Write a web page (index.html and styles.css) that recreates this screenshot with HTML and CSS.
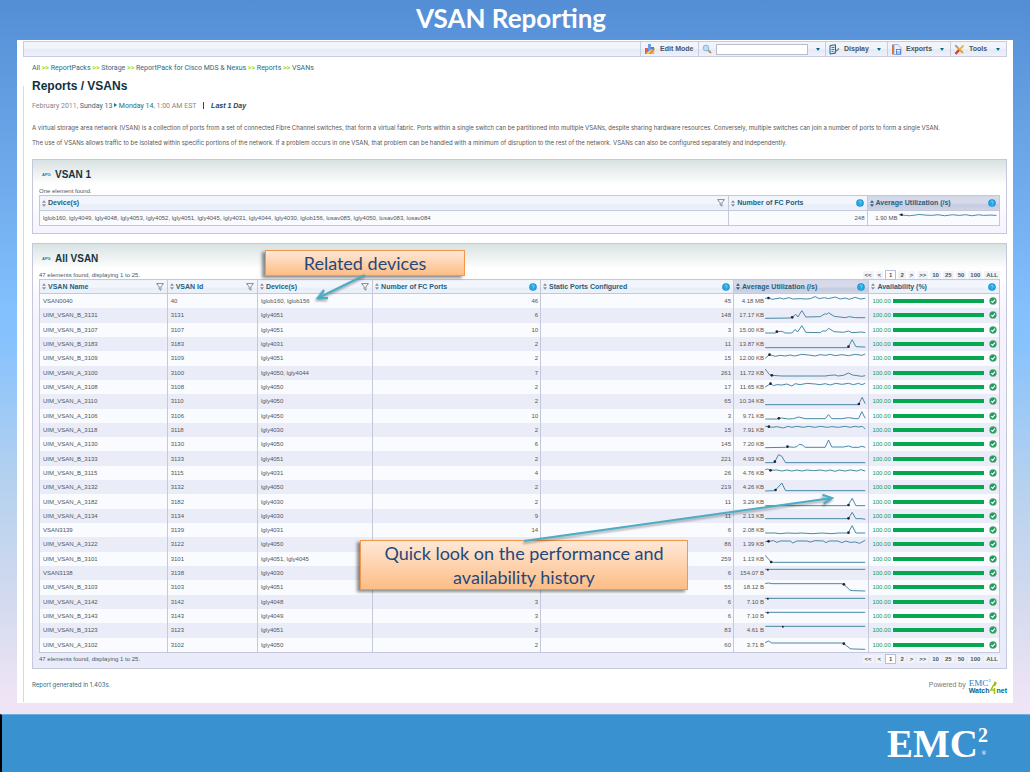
FILE: index.html
```html
<!DOCTYPE html>
<html lang="en">
<head>
<meta charset="utf-8">
<title>VSAN Reporting</title>
<link rel="stylesheet" href="styles.css">
</head>
<body>
<svg class="defs" aria-hidden="true">
  <defs>
    <symbol id="sort" viewBox="0 0 5 8"><path d="M2.5 0 5 3H0z M2.5 8 5 5H0z"/></symbol>
    <symbol id="funnel" viewBox="0 0 8 8"><path d="M.6.6h6.8L4.9 3.8v3.4L3.2 6V3.8z" fill="#fff" stroke="#666b78" stroke-width=".8"/></symbol>
    <symbol id="help" viewBox="0 0 8 8"><circle cx="4" cy="4" r="3.8" fill="#1592cf"/><circle cx="4" cy="4" r="3" fill="#22a5e2"/><path d="M2.8 3.1c0-1.6 2.5-1.5 2.4 0C5.1 4 4 4 4 5M4 5.8v.7" fill="none" stroke="#a5dcfa" stroke-width=".7"/></symbol>
    <symbol id="ok" viewBox="0 0 8 8"><circle cx="4" cy="4" r="3.7" fill="#6f968e"/><circle cx="4" cy="4" r="2.9" fill="#0fa552"/><path d="M2.3 4.1 3.6 5.3 5.9 2.7" fill="none" stroke="#fff" stroke-width="1.2"/></symbol>
    <marker id="head" viewBox="0 0 12 12" refX="10" refY="6" markerWidth="12" markerHeight="12" markerUnits="userSpaceOnUse" orient="auto"><path d="M1 1.5 10 6 1 10.5" fill="none" stroke="#4bacc6" stroke-width="2.2"/></marker>
  </defs>
</svg>
<div class="slide">
  <h1 class="slide-title">VSAN Reporting</h1>
  <main class="window">
    <div class="toolbar">
      <button class="tool edit" type="button">
        <svg width="12" height="12" viewBox="0 0 12 12"><path d="M1 5h3v6H1z" fill="#e15b4f"/><path d="M4 1h3v9H4z" fill="#6c9ee8"/><path d="M7 4h3v7H7z" fill="#4b7fd1"/><path d="M2 10 8 6l3 3-2 2H3z" fill="#f4c752"/><path d="m5 11 5-6 1 1-4 5z" fill="#d8843a"/></svg>
        Edit Mode</button>
      <div class="tool search">
        <svg width="10" height="10" viewBox="0 0 10 10"><path d="m5.5 5.5 3.5 3.5" stroke="#c8905c" stroke-width="1.8"/><circle cx="4" cy="4" r="2.9" fill="#b9dcf8" stroke="#8eb5dd"/></svg>
        <input type="text" aria-label="Search">
        <button class="drop" type="button" aria-label="Search options"><i class="caret"></i></button>
      </div>
      <button class="tool display" type="button">
        <svg width="11" height="11" viewBox="0 0 11 11"><path d="M1 1.500 6.500.8v8.400L1 10z" fill="#d8edf8" stroke="#285f86"/><path d="M2.500 3.500h3M2.500 5.500h3M2.500 7.500h2" stroke="#285f86" stroke-width=".8"/><path d="m5 8 4.500-4L10.500 5 6 9z" fill="#6d8698"/></svg>
        Display <i class="caret"></i></button>
      <button class="tool exports" type="button">
        <svg width="11" height="11" viewBox="0 0 11 11"><path d="M1 .5h2v10H1z" fill="#c77a50"/><path d="M3 .5h4l3 3v7H3z" fill="#e8f0fb" stroke="#8ba3cf" stroke-width=".8"/><path d="M5 5h5v5.500H5z" fill="#5c87d6"/><path d="M6 6h3v1.500H6zM6 8.500h3v1H6z" fill="#fff"/></svg>
        Exports <i class="caret"></i></button>
      <button class="tool tools" type="button">
        <svg width="11" height="11" viewBox="0 0 11 11"><path d="M1.500 1.500 9 9" stroke="#e2a23a" stroke-width="2"/><path d="M1 1.200 4 4" stroke="#9aa7b3" stroke-width="1.500"/><path d="M9.500 1.500 2 9" stroke="#f0b63c" stroke-width="1.800"/><path d="m5 6-3.500 4" stroke="#de3e2a" stroke-width="2.400"/></svg>
        Tools <i class="caret"></i></button>
    </div>

    <div class="report">
      <nav class="crumbs"><a href="#">All</a> <b>&gt;&gt;</b> <a href="#">ReportPacks</a> <b>&gt;&gt;</b> <a href="#">Storage</a> <b>&gt;&gt;</b> <a href="#">ReportPack for Cisco MDS &amp; Nexus</a> <b>&gt;&gt;</b> <a href="#">Reports</a> <b>&gt;&gt;</b> <a href="#">VSANs</a></nav>
      <h2>Reports / VSANs</h2>
      <p class="period">February 2011, <a href="#">Sunday 13</a> <i class="next"></i> <a href="#">Monday 14</a>, 1:00 AM EST <span class="range">Last 1 Day</span></p>
      <div class="about">
        <p>A virtual storage area network (VSAN) is a collection of ports from a set of connected Fibre Channel switches, that form a virtual fabric. Ports within a single switch can be partitioned into multiple VSANs, despite sharing hardware resources. Conversely, multiple switches can join a number of ports to form a single VSAN.</p>
        <p>The use of VSANs allows traffic to be isolated within specific portions of the network. If a problem occurs in one VSAN, that problem can be handled with a minimum of disruption to the rest of the network. VSANs can also be configured separately and independently.</p>
      </div>

      <section class="panel">
        <h3><small>APG</small>VSAN 1</h3>
        <div class="info"><span>One element found.</span></div>
        <table class="one">
          <colgroup><col class="w-list"><col class="w-count"><col></colgroup>
          <thead><tr>
            <th><div><svg class="sort"><use href="#sort"/></svg>Device(s)<svg class="ico"><use href="#funnel"/></svg></div></th>
            <th><div><svg class="sort"><use href="#sort"/></svg>Number of FC Ports<svg class="ico"><use href="#help"/></svg></div></th>
            <th class="sorted"><div><svg class="sort"><use href="#sort"/></svg>Average Utilization (/s)<svg class="ico"><use href="#help"/></svg></div></th>
          </tr></thead>
          <tbody><tr>
            <td>lglob160, lgly4049, lgly4048, lgly4053, lgly4052, lgly4051, lgly4045, lgly4031, lgly4044, lgly4030, lglob156, losav085, lgly4050, losav083, losav084</td>
            <td class="n">248</td>
            <td><div class="util"><span>1.90 MB</span><svg viewBox="0 0 303 42"><path d="M0 10 8 12 20 13 32 14 50 12 62 10 80 12 100 13 120 11 140 14 165 11 185 13 205 11 225 14 245 11 260 13 280 12 300 13"/><circle cx="8" cy="11" r="4"/></svg></div></td>
          </tr></tbody>
        </table>
      </section>

      <section class="panel">
        <h3><small>APG</small>All VSAN</h3>
        <div class="info"><span>47 elements found, displaying 1 to 25.</span>
          <nav class="pager"><a href="#">&lt;&lt;</a><a href="#">&lt;</a><a href="#" class="on">1</a><a href="#">2</a><a href="#">&gt;</a><a href="#">&gt;&gt;</a><a href="#">10</a><a href="#">25</a><a href="#">50</a><a href="#">100</a><a href="#">ALL</a></nav></div>
        <table class="all">
          <colgroup><col class="w-name"><col class="w-id"><col class="w-dev"><col class="w-fc"><col class="w-static"><col class="w-util"><col></colgroup>
          <thead><tr>
            <th><div><svg class="sort"><use href="#sort"/></svg>VSAN Name<svg class="ico"><use href="#funnel"/></svg></div></th>
            <th><div><svg class="sort"><use href="#sort"/></svg>VSAN Id<svg class="ico"><use href="#funnel"/></svg></div></th>
            <th><div><svg class="sort"><use href="#sort"/></svg>Device(s)<svg class="ico"><use href="#funnel"/></svg></div></th>
            <th><div><svg class="sort"><use href="#sort"/></svg>Number of FC Ports<svg class="ico"><use href="#help"/></svg></div></th>
            <th><div><svg class="sort"><use href="#sort"/></svg>Static Ports Configured<svg class="ico"><use href="#help"/></svg></div></th>
            <th class="sorted"><div><svg class="sort"><use href="#sort"/></svg>Average Utilization (/s)<svg class="ico"><use href="#help"/></svg></div></th>
            <th><div><svg class="sort"><use href="#sort"/></svg>Availability (%)<svg class="ico"><use href="#help"/></svg></div></th>
          </tr></thead>
          <tbody>
<tr><td>VSAN0040</td><td>40</td><td>lglob160, lglob156</td><td class="n">46</td><td class="n">45</td><td><div class="util"><span>4.18 MB</span><svg viewBox="0 0 303 42"><path d="M0 13 12 12 20 16 45 12 55 15 72 11 82 15 105 14 122 15 135 14 150 8 162 14 178 11 190 14 210 9 225 15 240 12 252 16 270 10 285 15 300 13"/><circle cx="10" cy="12" r="4"/></svg></div></td><td><div class="avail"><span>100.00</span><i></i><svg><use href="#ok"/></svg></div></td></tr>
<tr><td>UIM_VSAN_B_3131</td><td>3131</td><td>lgly4051</td><td class="n">6</td><td class="n">148</td><td><div class="util"><span>17.17 KB</span><svg viewBox="0 0 303 42"><path d="M0 31 75 30 82 27 92 19 98 27 110 8 122 27 165 26 180 17 185 19 190 14 207 25 240 29 253 26 270 29 300 29"/><circle cx="81" cy="28" r="4"/></svg></div></td><td><div class="avail"><span>100.00</span><i></i><svg><use href="#ok"/></svg></div></td></tr>
<tr><td>UIM_VSAN_B_3107</td><td>3107</td><td>lgly4051</td><td class="n">10</td><td class="n">3</td><td><div class="util"><span>15.00 KB</span><svg viewBox="0 0 303 42"><path d="M0 30 30 30 35 26 50 25 60 30 80 30 90 19 97 27 110 8 122 28 165 29 172 24 182 24 190 16 207 26 235 28 250 24 260 29 290 27 300 29"/><circle cx="35" cy="26" r="4"/></svg></div></td><td><div class="avail"><span>100.00</span><i></i><svg><use href="#ok"/></svg></div></td></tr>
<tr><td>UIM_VSAN_B_3183</td><td>3183</td><td>lgly4031</td><td class="n">2</td><td class="n">11</td><td><div class="util"><span>13.87 KB</span><svg viewBox="0 0 303 42"><path d="M0 32H246L250 29 261 8 272 29 300 30"/><circle cx="250" cy="29" r="4"/></svg></div></td><td><div class="avail"><span>100.00</span><i></i><svg><use href="#ok"/></svg></div></td></tr>
<tr><td>UIM_VSAN_B_3109</td><td>3109</td><td>lgly4051</td><td class="n">2</td><td class="n">15</td><td><div class="util"><span>12.00 KB</span><svg viewBox="0 0 303 42"><path d="M0 22 13 11 30 16 45 13 60 15 75 12 88 15 110 10 130 12 150 15 165 11 182 13 195 10 210 14 230 11 250 14 270 10 290 13 300 9"/><circle cx="13" cy="11" r="4"/></svg></div></td><td><div class="avail"><span>100.00</span><i></i><svg><use href="#ok"/></svg></div></td></tr>
<tr><td>UIM_VSAN_A_3100</td><td>3100</td><td>lgly4050, lgly4044</td><td class="n">7</td><td class="n">261</td><td><div class="util"><span>11.72 KB</span><svg viewBox="0 0 303 42"><path d="M0 9 13 26 20 28 50 30H180L195 28 210 27 218 30 235 28 250 21 262 27 290 31 300 29"/><circle cx="20" cy="28" r="4"/></svg></div></td><td><div class="avail"><span>100.00</span><i></i><svg><use href="#ok"/></svg></div></td></tr>
<tr><td>UIM_VSAN_A_3108</td><td>3108</td><td>lgly4050</td><td class="n">2</td><td class="n">17</td><td><div class="util"><span>11.65 KB</span><svg viewBox="0 0 303 42"><path d="M0 21 16 11 25 17 35 14 50 15 65 12 80 18 90 11 105 14 125 10 150 12 165 14 180 11 195 15 212 10 230 13 250 10 265 14 280 10 290 14 300 10"/><circle cx="16" cy="11" r="4"/></svg></div></td><td><div class="avail"><span>100.00</span><i></i><svg><use href="#ok"/></svg></div></td></tr>
<tr><td>UIM_VSAN_A_3110</td><td>3110</td><td>lgly4050</td><td class="n">2</td><td class="n">65</td><td><div class="util"><span>10.34 KB</span><svg viewBox="0 0 303 42"><path d="M0 32H278L281 30 291 10 300 29"/><circle cx="281" cy="30" r="4"/></svg></div></td><td><div class="avail"><span>100.00</span><i></i><svg><use href="#ok"/></svg></div></td></tr>
<tr><td>UIM_VSAN_A_3106</td><td>3106</td><td>lgly4050</td><td class="n">10</td><td class="n">3</td><td><div class="util"><span>9.71 KB</span><svg viewBox="0 0 303 42"><path d="M0 30H35L41 28 50 27 70 30 85 29 100 24 120 29H180L190 17 200 29H230L250 26 270 29H280L290 8 300 28"/><circle cx="41" cy="28" r="4"/></svg></div></td><td><div class="avail"><span>100.00</span><i></i><svg><use href="#ok"/></svg></div></td></tr>
<tr><td>UIM_VSAN_A_3118</td><td>3118</td><td>lgly4030</td><td class="n">2</td><td class="n">15</td><td><div class="util"><span>7.91 KB</span><svg viewBox="0 0 303 42"><path d="M0 10 11 11 20 13 35 11 55 15 68 10 80 13 95 10 115 13 130 10 150 13 165 10 185 13 200 11 220 13 240 10 255 13 270 10 280 12 292 10 300 18"/><circle cx="11" cy="11" r="4"/></svg></div></td><td><div class="avail"><span>100.00</span><i></i><svg><use href="#ok"/></svg></div></td></tr>
<tr><td>UIM_VSAN_A_3130</td><td>3130</td><td>lgly4050</td><td class="n">6</td><td class="n">145</td><td><div class="util"><span>7.20 KB</span><svg viewBox="0 0 303 42"><path d="M0 32 60 31 67 29 85 31 95 29 102 22 112 24 120 31H180L190 9 200 30H235L250 27 262 31 280 31 290 28 300 31"/><circle cx="67" cy="29" r="4"/></svg></div></td><td><div class="avail"><span>100.00</span><i></i><svg><use href="#ok"/></svg></div></td></tr>
<tr><td>UIM_VSAN_B_3133</td><td>3133</td><td>lgly4051</td><td class="n">2</td><td class="n">221</td><td><div class="util"><span>4.93 KB</span><svg viewBox="0 0 303 42"><path d="M0 32H25L29 29 40 8 50 13 61 32H300"/><circle cx="29" cy="29" r="4"/></svg></div></td><td><div class="avail"><span>100.00</span><i></i><svg><use href="#ok"/></svg></div></td></tr>
<tr><td>UIM_VSAN_B_3115</td><td>3115</td><td>lgly4031</td><td class="n">4</td><td class="n">26</td><td><div class="util"><span>4.76 KB</span><svg viewBox="0 0 303 42"><path d="M0 11 8 9 16 13 35 12 50 15 65 12 80 15 95 12 110 15 125 12 145 14 165 12 182 15 195 12 210 16 222 12 240 15 255 12 275 15 287 11 300 15"/><circle cx="16" cy="13" r="4"/></svg></div></td><td><div class="avail"><span>100.00</span><i></i><svg><use href="#ok"/></svg></div></td></tr>
<tr><td>UIM_VSAN_A_3132</td><td>3132</td><td>lgly4050</td><td class="n">2</td><td class="n">219</td><td><div class="util"><span>4.26 KB</span><svg viewBox="0 0 303 42"><path d="M0 33 25 32 31 30 50 9 61 32H300"/><circle cx="31" cy="30" r="4"/></svg></div></td><td><div class="avail"><span>100.00</span><i></i><svg><use href="#ok"/></svg></div></td></tr>
<tr><td>UIM_VSAN_A_3182</td><td>3182</td><td>lgly4030</td><td class="n">2</td><td class="n">11</td><td><div class="util"><span>3.29 KB</span><svg viewBox="0 0 303 42"><path d="M0 32H246L250 29 261 10 272 32H300"/><circle cx="250" cy="30" r="4"/></svg></div></td><td><div class="avail"><span>100.00</span><i></i><svg><use href="#ok"/></svg></div></td></tr>
<tr><td>UIM_VSAN_A_3134</td><td>3134</td><td>lgly4030</td><td class="n">9</td><td class="n">11</td><td><div class="util"><span>2.13 KB</span><svg viewBox="0 0 303 42"><path d="M0 29H246L250 28 261 10 272 29 290 29 300 31"/><circle cx="250" cy="28" r="4"/></svg></div></td><td><div class="avail"><span>100.00</span><i></i><svg><use href="#ok"/></svg></div></td></tr>
<tr><td>VSAN3139</td><td>3139</td><td>lgly4031</td><td class="n">14</td><td class="n">6</td><td><div class="util"><span>2.08 KB</span><svg viewBox="0 0 303 42"><path d="M0 30H30L45 32 65 30 90 31 110 30 140 32 170 30 200 32 220 30H246L250 28 261 8 272 30H300"/><circle cx="250" cy="29" r="4"/></svg></div></td><td><div class="avail"><span>100.00</span><i></i><svg><use href="#ok"/></svg></div></td></tr>
<tr><td>UIM_VSAN_A_3122</td><td>3122</td><td>lgly4050</td><td class="n"></td><td class="n">86</td><td><div class="util"><span>1.39 KB</span><svg viewBox="0 0 303 42"><path d="M0 14 10 13 25 11 35 16 45 12 75 12 83 18 95 12 125 12 135 15 150 11 175 12 182 17 192 12 218 12 230 17 242 12 255 16 270 15 283 19 300 10"/><circle cx="10" cy="13" r="4"/></svg></div></td><td><div class="avail"><span>100.00</span><i></i><svg><use href="#ok"/></svg></div></td></tr>
<tr><td>UIM_VSAN_B_3101</td><td>3101</td><td>lgly4051, lgly4045</td><td class="n"></td><td class="n">259</td><td><div class="util"><span>1.13 KB</span><svg viewBox="0 0 303 42"><path d="M0 10 18 30 25 31H300"/><circle cx="18" cy="30" r="4"/></svg></div></td><td><div class="avail"><span>100.00</span><i></i><svg><use href="#ok"/></svg></div></td></tr>
<tr><td>VSAN3138</td><td>3138</td><td>lgly4030</td><td class="n"></td><td class="n">6</td><td><div class="util"><span>154.07 B</span><svg viewBox="0 0 303 42"><path d="M0 10H300"/><circle cx="8" cy="11" r="3"/></svg></div></td><td><div class="avail"><span>100.00</span><i></i><svg><use href="#ok"/></svg></div></td></tr>
<tr><td>UIM_VSAN_B_3103</td><td>3103</td><td>lgly4051</td><td class="n">2</td><td class="n">55</td><td><div class="util"><span>18.12 B</span><svg viewBox="0 0 303 42"><path d="M0 11 10 9 20 11H230L236 13 255 31 265 32 300 33"/><circle cx="236" cy="13" r="4"/></svg></div></td><td><div class="avail"><span>100.00</span><i></i><svg><use href="#ok"/></svg></div></td></tr>
<tr><td>UIM_VSAN_A_3142</td><td>3142</td><td>lgly4048</td><td class="n">3</td><td class="n">6</td><td><div class="util"><span>7.10 B</span><svg viewBox="0 0 303 42"><path d="M0 10H300"/><circle cx="8" cy="11" r="3"/></svg></div></td><td><div class="avail"><span>100.00</span><i></i><svg><use href="#ok"/></svg></div></td></tr>
<tr><td>UIM_VSAN_B_3143</td><td>3143</td><td>lgly4049</td><td class="n">3</td><td class="n">6</td><td><div class="util"><span>7.10 B</span><svg viewBox="0 0 303 42"><path d="M0 10H300"/><circle cx="8" cy="11" r="3"/></svg></div></td><td><div class="avail"><span>100.00</span><i></i><svg><use href="#ok"/></svg></div></td></tr>
<tr><td>UIM_VSAN_B_3123</td><td>3123</td><td>lgly4051</td><td class="n">2</td><td class="n">83</td><td><div class="util"><span>4.61 B</span><svg viewBox="0 0 303 42"><path d="M0 10H300"/><circle cx="53" cy="11" r="3"/></svg></div></td><td><div class="avail"><span>100.00</span><i></i><svg><use href="#ok"/></svg></div></td></tr>
<tr><td>UIM_VSAN_A_3102</td><td>3102</td><td>lgly4050</td><td class="n">2</td><td class="n">60</td><td><div class="util"><span>3.71 B</span><svg viewBox="0 0 303 42"><path d="M0 14 10 9 20 15H230L236 17 255 32 265 33 300 34"/><circle cx="236" cy="17" r="4"/></svg></div></td><td><div class="avail"><span>100.00</span><i></i><svg><use href="#ok"/></svg></div></td></tr>
          </tbody>
        </table>
        <div class="info bottom"><span>47 elements found, displaying 1 to 25.</span>
          <nav class="pager"><a href="#">&lt;&lt;</a><a href="#">&lt;</a><a href="#" class="on">1</a><a href="#">2</a><a href="#">&gt;</a><a href="#">&gt;&gt;</a><a href="#">10</a><a href="#">25</a><a href="#">50</a><a href="#">100</a><a href="#">ALL</a></nav></div>
      </section>

      <div class="foot">
        <span class="time">Report generated in 1.403s.</span>
        <span class="powered">Powered by
          <span class="w4n"><span class="emc">EMC<sup>2</sup></span><span class="watch">Watch<svg width="7" height="14" viewBox="0 0 7 14"><path d="M4.500 0 7 2 5 5.500 3 4.500z" fill="#9cc31c"/><path d="M3.500 4 1 9h4M4.500 7v6" fill="none" stroke="#9cc31c" stroke-width="1.500"/></svg>net</span></span>
        </span>
      </div>
    </div>
  </main>

  <footer class="brand"><span class="logo">EMC<sup>2</sup><small>®</small></span></footer>

  <div class="callout related">Related devices</div>
  <div class="callout quick">Quick look on the performance and availability history</div>
  <svg class="arrows" width="1030" height="772" aria-hidden="true"><path d="M365 275 318 298" marker-end="url(#head)"/><path d="M524 541 832 498" marker-end="url(#head)"/></svg>
</div>
</body>
</html>
```
FILE: styles.css
```css
* { box-sizing: border-box; }

body {
  margin: 0;
  font-family: "Liberation Sans", Arial, sans-serif;
  font-size: 6px;
  line-height: 8px;
  color: #555;
}

h1, h2, h3, p { margin: 0; }
a { color: #2a6c82; text-decoration: none; }
.defs { position: absolute; width: 0; height: 0; }

.slide {
  position: relative;
  min-height: 100vh;
  display: flex;
  flex-direction: column;
  background: linear-gradient(#538ed5 0, #5a94da 40px, #6aa6e8 150px, #83c0fe 310px, #86c2fd 340px, #b4d1ef 480px, #d0d9ee 590px, #efe4f5 700px);
}

.slide-title {
  height: 40px;
  padding-right: 8px;
  font: bold 26px/36px Lato, "Open Sans", sans-serif;
  text-align: center;
  color: #fff;
}

.window {
  margin: 0 17px;
  padding: 1px 6px 1px;
  background: #fff;
}

/* toolbar */
.toolbar {
  display: flex;
  justify-content: flex-end;
  height: 16px;
  border: 1px solid #c9cbdf;
  background: linear-gradient(#f1f4fa 0 45%, #e6eaf5 55%, #eef1fa);
}
.tool {
  display: flex;
  align-items: center;
  gap: 4px;
  padding: 0 3px;
  border: 0;
  border-left: 1px solid #c9cbdf;
  background: none;
  font: bold 7px/14px "Liberation Sans", Arial, sans-serif;
  color: #4a5560;
}
.edit { width: 58px; }
.search { width: 127px; }
.search input {
  width: 92px;
  height: 11px;
  padding: 0 2px;
  border: 1px solid #b9bccb;
  background: #fff;
  font-size: 7px;
}
.drop {
  display: flex;
  align-items: center;
  margin-left: auto;
  padding: 0 2px;
  border: 0;
  background: none;
}
.caret {
  width: 0;
  height: 0;
  margin-left: auto;
  margin-right: 3px;
  border: solid transparent;
  border-width: 3px 2px 0;
  border-top-color: #0b6b8c;
}
.drop .caret { margin: 0; }
.display { width: 62px; }
.exports { width: 63px; }
.tools { width: 56px; }

/* report body */
.report { padding: 6px 0 8px 9px; background: linear-gradient(#d8d8e2, #d8d8e2) 0 29px / 1px 100% no-repeat; }
.crumbs, .period { font-family: Roboto, "Liberation Sans", sans-serif; font-size: 7px; }
.about, .time { font-family: Inter, "Liberation Sans", sans-serif; font-size: 6px; }
.crumbs { line-height: 10px; color: #2a6c82; }
.crumbs b { font-weight: bold; color: #a6de2c; }
h2 { margin-top: 5px; font-size: 12px; line-height: 16px; color: #10303e; }
.period { margin-top: 7px; line-height: 10px; color: #888; }
.next {
  display: inline-block;
  vertical-align: 1px;
  border: solid transparent;
  border-width: 2px 0 2px 3px;
  border-left-color: #2a6c82;
}
.range {
  margin-left: 5px;
  padding-left: 7px;
  border-left: 1px solid #2a4c5c;
  font: italic bold 7px/8px "Liberation Sans", Arial, sans-serif;
  color: #1f4656;
}
.about { margin-top: 9px; line-height: 15px; color: #555; }

.panel {
  margin-top: 9px;
  padding: 0 6px 7px;
  border: 1px solid #c4c8da;
  background: linear-gradient(#d9e2e2, #fff 25px, #fff 30px, #f5f3fe 74px, #e9ecf8 100%);
}
h3 {
  display: flex;
  align-items: center;
  padding: 7px 0 4px 3px;
  font-size: 10px;
  line-height: 16px;
  color: #17343f;
}
h3 small { width: 13px; font-size: 4px; color: #2a7893; }
.info {
  display: flex;
  justify-content: space-between;
  align-items: center;
  height: 8px;
  color: #555;
}
.info.bottom { margin: 2px 0 -2px; }

.pager { display: flex; align-items: center; gap: 2px; }
.pager a {
  padding: 0 2px;
  background: #f1f3fa;
  font-weight: bold;
  color: #555;
}
.pager .on { padding: 0 3px; border: 1px solid #b9bed8; background: #fff; }

/* tables */
table {
  width: 100%;
  table-layout: fixed;
  border-collapse: collapse;
  border: 1px solid #c4c8da;
}
.w-list { width: 71.8%; }
.w-count { width: 14.4%; }
.w-name { width: 13.3%; }
.w-id { width: 9.4%; }
.w-dev { width: 12%; }
.w-fc { width: 17.5%; }
.w-static { width: 20.1%; }
.w-util { width: 14.1%; }
th {
  height: 15px;
  padding: 0 3px 0 2px;
  border: solid #c4c8da;
  border-width: 0 1px 1px;
  background: linear-gradient(#f2f5fc 0 50%, #e8edf7 60%, #edf1fa);
  font-size: 7px;
  text-align: left;
  color: #23607c;
}
th.sorted { background: linear-gradient(#d5d9ea 0 50%, #c4cadf 60%, #d0d5e7); }
th div { display: flex; align-items: center; gap: 2px; white-space: nowrap; }
.sort { width: 4px; height: 7px; fill: #8a8f9c; }
.sorted .sort { fill: #23607c; }
.ico { width: 8px; height: 8px; margin-left: auto; }
td {
  height: 14px;
  padding: 0 2px 0 3px;
  border: solid #c4c8da;
  border-width: 0 1px;
  line-height: 10px;
  white-space: nowrap;
  color: #555;
}
tbody tr { background: #f9fbfe; }
tbody tr:nth-child(even) { background: #eaecf8; }
.all { height: 374px; }
.all th { height: 14px; }
.n { text-align: right; }
.util { display: flex; align-items: center; gap: 1px; }
.util span { width: 27px; text-align: right; }
.util svg { flex: 1; min-width: 0; height: 14px; fill: none; stroke: #4a89a5; stroke-width: 3; }
.util circle { fill: #223; stroke: none; }
.avail { display: flex; align-items: center; gap: 2px; color: #159a52; }
.avail i { flex: 1; height: 4px; background: #04a64e; }
.avail svg { width: 8px; height: 8px; margin: 0 0 0 3px; }

.foot {
  display: flex;
  justify-content: space-between;
  padding-top: 10px;
  line-height: 12px;
}
.time { color: #2a6c82; }
.powered { display: flex; gap: 3px; font-size: 7px; color: #777; }
.w4n { display: flex; flex-direction: column; line-height: 7px; }
.emc { font: 9px/8px "Liberation Serif", serif; color: #2a7fc0; }
.emc sup { font-size: 5px; line-height: 1px; }
.watch { display: flex; height: 7px; font-weight: bold; font-size: 7px; color: #0b5f86; }
.watch svg { margin-top: -6px; }

.brand {
  flex: 1;
  display: flex;
  justify-content: flex-end;
  align-items: center;
  margin-top: 11px;
  padding-right: 42px;
  border-top: 1px solid #6cb0e2;
  border-left: 2px solid #000;
  background: #3991d0;
  font: bold 39px/40px "Liberation Serif", serif;
  color: #fff;
}
.logo { position: relative; }
.brand sup { font-size: 20px; line-height: 1px; vertical-align: 15px; }
.brand small { position: absolute; right: 2px; bottom: 8px; font-size: 6px; line-height: 6px; }

/* annotations over the report */
.callout {
  position: absolute;
  border: 1px solid #f79646;
  background: linear-gradient(#fee8d8, #fdbd85);
  box-shadow: -3px 2px 3px rgba(0, 0, 0, .45);
  font: 18px/24px Lato, "Open Sans", sans-serif;
  text-align: center;
  color: #1f497d;
}
.related { left: 265px; top: 250px; width: 200px; }
.quick { left: 360px; top: 540px; width: 328px; padding: 0 14px; }
.arrows {
  position: absolute;
  left: 0;
  top: 0;
  pointer-events: none;
  fill: none;
  stroke: #4bacc6;
  stroke-width: 2;
  filter: drop-shadow(-1px 2px 1px rgba(0, 0, 0, .35));
}
```
